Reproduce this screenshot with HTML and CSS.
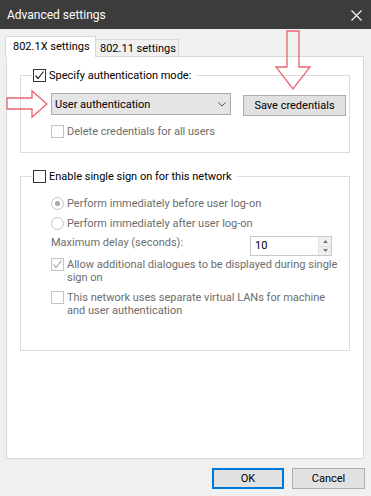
FILE: index.html
```html
<!DOCTYPE html>
<html lang="en">
<head>
  <meta charset="UTF-8">
  <title>Advanced settings</title>
  <link rel="stylesheet" href="styles.css">
</head>
<body>
  <div class="titlebar">
    <span class="title">Advanced settings</span>
    <svg class="close" width="11" height="11" viewBox="0 0 11 11"><path d="M0.5 0.5 L10.5 10.5 M10.5 0.5 L0.5 10.5" stroke="#fff" stroke-width="1.1"/></svg>
  </div>

  <div class="tabs">
    <div class="tab active">802.1X settings</div>
    <div class="tab">802.11 settings</div>
  </div>

  <section class="panel">
    <fieldset class="group group-auth">
      <legend>
        <label class="check">
          <span class="box checked"><svg width="11" height="11" viewBox="0 0 11 11"><path d="M1.5 5.5 L4 8.5 L9.5 1.5" fill="none" stroke="#222" stroke-width="1.2"/></svg></span>
          Specify authentication mode:
        </label>
      </legend>
      <div class="group-body">
        <div class="auth-row">
          <div class="select">
            <span>User authentication</span>
            <svg width="8" height="5" viewBox="0 0 8 5"><path d="M0.5 0.5 L4 4 L7.5 0.5" fill="none" stroke="#555" stroke-width="1"/></svg>
          </div>
          <button class="btn save">Save credentials</button>
        </div>
        <label class="check disabled delete-row">
          <span class="box"></span>
          Delete credentials for all users
        </label>
      </div>
    </fieldset>

    <fieldset class="group group-sso">
      <legend>
        <label class="check">
          <span class="box"></span>
          Enable single sign on for this network
        </label>
      </legend>
      <div class="group-body">
        <label class="radio disabled">
          <span class="dot checked"></span>
          Perform immediately before user log-on
        </label>
        <label class="radio disabled">
          <span class="dot"></span>
          Perform immediately after user log-on
        </label>
        <div class="delay-row">
          <span class="delay-label">Maximum delay (seconds):</span>
          <div class="spinner">
            <span class="spin-value">10</span>
            <div class="spin-buttons">
              <span><svg width="5" height="3" viewBox="0 0 5 3"><path d="M0 3 L2.5 0 L5 3 Z" fill="#777"/></svg></span>
              <span><svg width="5" height="3" viewBox="0 0 5 3"><path d="M0 0 L2.5 3 L5 0 Z" fill="#777"/></svg></span>
            </div>
          </div>
        </div>
        <label class="check disabled multi allow-row">
          <span class="box checked"><svg width="11" height="11" viewBox="0 0 11 11"><path d="M1.5 5.5 L4 8.5 L9.5 1.5" fill="none" stroke="#9a9a9a" stroke-width="1.1"/></svg></span>
          <span class="multi-text">Allow additional dialogues to be displayed during single sign on</span>
        </label>
        <label class="check disabled multi vlan-row">
          <span class="box"></span>
          <span class="multi-text">This network uses separate virtual LANs for machine and user authentication</span>
        </label>
      </div>
    </fieldset>
  </section>

  <div class="actions">
    <button class="btn default">OK</button>
    <button class="btn">Cancel</button>
  </div>

  <!-- annotation arrows drawn over the dialog -->
  <svg class="arrow arrow-down" width="40" height="64" viewBox="272 28 40 64">
    <path d="M287 31 L299 31 L299 67 L310 67 L293 89 L276 67 L287 67 Z" fill="none" stroke="#e9646f" stroke-width="1.3"/>
  </svg>
  <svg class="arrow arrow-right" width="50" height="32" viewBox="4 89 50 32">
    <path d="M7 98 L32 98 L32 91 L47 104 L32 117 L32 109 L7 109 Z" fill="none" stroke="#e9646f" stroke-width="1.3"/>
  </svg>
</body>
</html>
```

FILE: styles.css
```css
body {
  margin: 0;
  width: 371px;
  height: 496px;
  position: relative;
  overflow: hidden;
  background: #f0f0f0;
  color: #000;
  font-family: "Segoe UI", Roboto, sans-serif;
  font-size: 11px;
}
.titlebar {
  height: 29px;
  background: #3c3c3c;
  color: #fff;
  display: flex;
  align-items: center;
  justify-content: space-between;
  padding: 0 9px 0 7px;
}
.title {
  font-size: 12px;
}
.close {
  margin-top: 1px;
}
.tabs {
  display: flex;
  align-items: flex-end;
  height: 20px;
  margin-top: 7px;
  padding-left: 5px;
  white-space: nowrap;
}
.tab {
  box-sizing: border-box;
  height: 17px;
  width: 83px;
  padding-left: 4px;
  line-height: 17px;
  background: #f0f0f0;
  border: 1px solid #d9d9d9;
  border-left: none;
  border-bottom: none;
}
.tab.active {
  position: relative;
  z-index: 1;
  width: 91px;
  height: 21px;
  margin-bottom: -1px;
  padding-left: 7px;
  line-height: 19px;
  background: #fff;
  border-left: 1px solid #d9d9d9;
}
.panel {
  box-sizing: border-box;
  width: 358px;
  height: 403px;
  margin-left: 6px;
  background: #fff;
  border: 1px solid #d9d9d9;
  overflow: hidden;
}
.group {
  box-sizing: border-box;
  width: 330px;
  margin: 0 0 0 13px;
  border: 1px solid #dcdcdc;
  padding: 10px 0 13px 11px;
}
.group legend {
  padding: 0 5px 0 1px;
  margin: 0;
}
.group-auth {
  margin-top: 11px;
}
.group-sso {
  margin-top: 16px;
  padding-top: 9px;
  padding-bottom: 33px;
}
.group-body {
  padding-left: 19px;
}
.check, .radio {
  display: flex;
  align-items: center;
  gap: 3px;
  height: 15px;
  white-space: nowrap;
}
.disabled {
  color: #6d6d6d;
}
.box {
  box-sizing: border-box;
  width: 13px;
  height: 13px;
  flex: none;
  border: 1px solid #333;
  background: #fff;
  display: flex;
}
.disabled .box {
  border-color: #c4c4c4;
}
.auth-row {
  display: flex;
  align-items: flex-start;
}
.select {
  box-sizing: border-box;
  width: 180px;
  height: 22px;
  padding: 0 4px 0 3px;
  display: flex;
  align-items: center;
  justify-content: space-between;
  background: #e5e5e5;
  border: 1px solid #acacac;
}
.btn {
  box-sizing: border-box;
  height: 21px;
  padding: 0;
  background: #e1e1e1;
  border: 1px solid #adadad;
  font-family: inherit;
  font-size: 11px;
  color: #000;
}
.save {
  width: 103px;
  margin: 2px 0 0 12px;
}
.delete-row {
  margin-top: 8px;
}
.radio {
  height: 20px;
}
.dot {
  box-sizing: border-box;
  width: 13px;
  height: 13px;
  flex: none;
  border: 1px solid #c4c4c4;
  border-radius: 50%;
  background: #fff;
  display: flex;
  align-items: center;
  justify-content: center;
}
.dot.checked::after {
  content: "";
  width: 5px;
  height: 5px;
  border-radius: 50%;
  background: #a6a6a6;
}
.delay-row {
  display: flex;
  align-items: flex-start;
  color: #6d6d6d;
}
.delay-label {
  width: 199px;
  line-height: 20px;
}
.spinner {
  box-sizing: border-box;
  width: 82px;
  height: 20px;
  margin-top: 3px;
  display: flex;
  justify-content: space-between;
  border: 1px solid #c8c8c8;
  background: #fff;
  color: #000;
}
.spin-value {
  padding-left: 4px;
  line-height: 18px;
}
.spin-buttons {
  width: 12px;
  display: flex;
  flex-direction: column;
  background: #f0f0f0;
  border-left: 1px solid #e2e2e2;
}
.spin-buttons span {
  flex: 1;
  display: flex;
  align-items: center;
  justify-content: center;
}
.spin-buttons span + span {
  border-top: 1px solid #dedede;
}
.multi {
  height: auto;
  align-items: flex-start;
  line-height: 13px;
  white-space: normal;
}
.multi-text {
  width: 266px;
}
.allow-row .multi-text {
  width: 280px;
}
.allow-row {
  margin-top: 2px;
}
.vlan-row {
  margin-top: 7px;
}
.actions {
  display: flex;
  justify-content: flex-end;
  gap: 8px;
  margin-top: 9px;
  padding-right: 6px;
}
.actions .btn {
  width: 73px;
}
.actions .btn.default {
  width: 72px;
  border: 2px solid #0078d7;
}
.arrow {
  position: absolute;
}
.arrow-down {
  left: 272px;
  top: 28px;
}
.arrow-right {
  left: 4px;
  top: 89px;
}
```
